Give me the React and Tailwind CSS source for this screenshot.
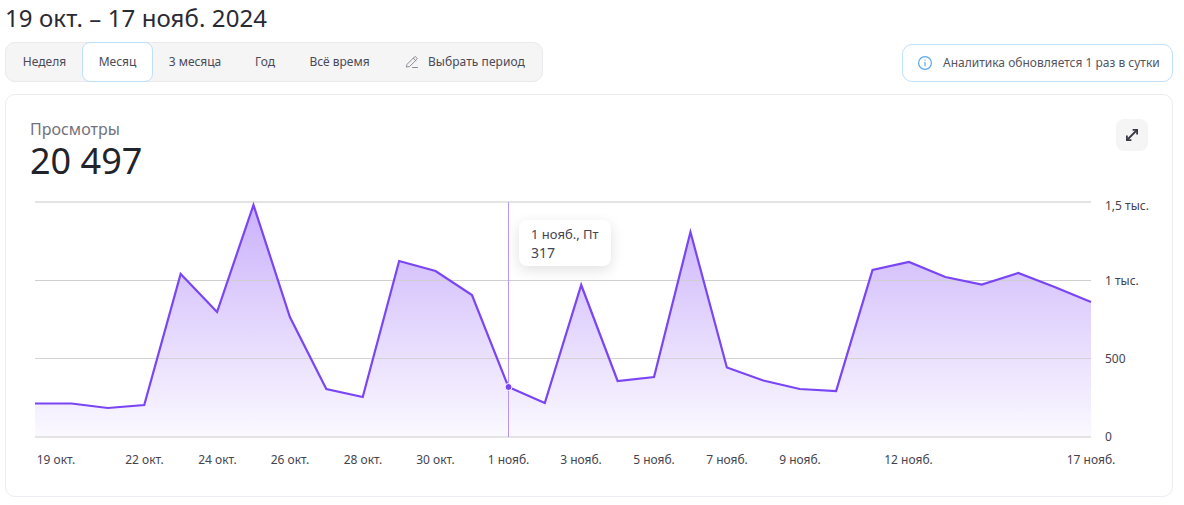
import React from "react";

const ys = [403.5,403.5,408,405,274,312,205,317,389,397,261,271,295,387,403,285,381,377,232,367.5,380.5,389,391,270,262,277,284.5,273,287,302];
const pts = ys.map((y, i) => [35 + (i * 1056) / 29, y]);
const line = pts.map((p) => p.join(",")).join(" ");
const area = `35,437 ${line} 1091,437`;
const xl = [[56,"19 окт."],[144.5,"22 окт."],[217.5,"24 окт."],[290,"26 окт."],[363,"28 окт."],[435.5,"30 окт."],[508.5,"1 нояб."],[581,"3 нояб."],[654,"5 нояб."],[727,"7 нояб."],[800,"9 нояб."],[908.5,"12 нояб."],[1091,"17 нояб."]];
const yl = [[209.5,"1,5 тыс."],[285,"1 тыс."],[362.5,"500"],[441,"0"]];
const tabs = [["3 месяца","w-[84px]"],["Год","w-[56px]"],["Всё время","w-[93px]"]];

export default function App() {
  return (
    <div className="relative h-[505px] w-[1184px] overflow-hidden bg-white pl-[5px] pr-[11px] font-['Noto_Sans','Open_Sans',sans-serif] text-[#2e2e38]">
      <h1 className="pt-px pb-px text-2xl leading-[33px] font-normal tracking-[0.09px] text-[#2a2a33]">19 окт. – 17 нояб. 2024</h1>
      <div className="mt-[7px] flex items-start justify-between">
        <div className="flex h-10 w-[538px] items-center rounded-[10px] border border-[#e9e9ee] bg-[#f5f5f6] text-xs text-[#4a4a55]">
          <div className="flex h-10 w-[76px] items-center justify-center pl-px">Неделя</div>
          <div className="flex h-10 w-[71px] items-center justify-center rounded-[8px] border border-[#bfe0fb] bg-white">Месяц</div>
          {tabs.map(([t, w]) => (
            <div key={t} className={`flex h-10 items-center justify-center ${w}`}>{t}</div>
          ))}
          <div className="ml-[19px] flex items-center gap-[9px]">
            <svg width="14" height="14" viewBox="0 0 14 14" fill="none" stroke="#8b8b96" strokeWidth="1" strokeLinejoin="round" strokeLinecap="round">
              <path d="M2.2 9.2 9.3 2.1a1.2 1.2 0 0 1 1.8 0l.6.6a1.2 1.2 0 0 1 0 1.8l-7.1 7-2.9.5z" />
              <path d="M8.3 3.2l2.6 2.5" />
              <path d="M7.5 12.5h5" />
            </svg>
            <span className="tracking-[0.05px]">Выбрать период</span>
          </div>
        </div>
        <div className="mt-[2px] flex h-[38px] w-[271px] items-center rounded-[10px] border border-[#bfe0fb] bg-white pl-[14px] text-xs text-[#55555f]">
          <svg width="16" height="16" viewBox="0 0 16 16" fill="none" stroke="#5aa9ee" strokeWidth="1.2" strokeLinecap="round" className="mr-[10px]">
            <circle cx="8" cy="8" r="6.4" />
            <path d="M8 7.4v3.4" />
            <path d="M8 5.1v.1" />
          </svg>
          <span>Аналитика обновляется 1 раз в сутки</span>
        </div>
      </div>
      <div className="relative mt-3 h-[403px] rounded-[10px] border border-[#ececf2] bg-white pl-6 pt-6">
        <div className="text-base leading-5 text-[#72727c]">Просмотры</div>
        <div className="text-[36px] leading-[44px] text-[#23232b]">20 497</div>
        <button className="absolute right-6 top-6 flex h-8 w-8 items-center justify-center rounded-[8px] bg-[#f5f5f6]">
          <svg width="14" height="14" viewBox="0 0 14 14" fill="none" stroke="#3a3a46" strokeWidth="1.8">
            <path d="M7.6 1.9h4.5v4.5" />
            <path d="M12 2 2 12" />
            <path d="M1.9 7.6v4.5h4.5" />
          </svg>
        </button>
      </div>
      <svg width="1184" height="505" viewBox="0 0 1184 505" className="pointer-events-none absolute left-0 top-0" fontFamily="'Noto Sans','Open Sans',sans-serif" fontSize="12">
        <defs>
          <linearGradient id="fillg" x1="0" y1="205" x2="0" y2="437" gradientUnits="userSpaceOnUse">
            <stop offset="0" stopColor="#7433f5" stopOpacity="0.38" />
            <stop offset="1" stopColor="#7433f5" stopOpacity="0.03" />
          </linearGradient>
        </defs>
        <path d="M35 202H1091" stroke="#e4e4e4" strokeWidth="2" />
        <polygon points={area} fill="url(#fillg)" />
        <path d="M35 280.5H1091" stroke="#cfcfcf" />
        <path d="M35 358.5H1091" stroke="#cfcfcf" strokeOpacity="0.9" />
        <path d="M35 437H1091" stroke="#e4e4e4" strokeWidth="2" />
        <path d="M508.5 202V437" stroke="#b795ff" />
        <polyline points={line} fill="none" stroke="#7a45f5" strokeWidth="2.2" strokeLinejoin="miter" />
        <circle cx="508.5" cy="387" r="3.5" fill="#7a45f5" stroke="#fff" strokeWidth="1" />
        {xl.map(([x, t]) => (
          <text key={t} x={x} y="464" textAnchor="middle" fill="#44444f">{t}</text>
        ))}
        {yl.map(([y, t]) => (
          <text key={t} x="1105" y={y} fill="#44444f">{t}</text>
        ))}
      </svg>
      <div className="absolute left-[519px] top-[220px] h-[46px] w-[92px] rounded-[8px] bg-white pl-3 pt-[4px] text-[13px] leading-[20px] text-[#44444f] shadow-[0_4px_14px_rgba(0,0,0,0.12)]">
        <div>1 нояб., Пт</div>
        <div className="-mt-px text-sm">317</div>
      </div>
    </div>
  );
}
